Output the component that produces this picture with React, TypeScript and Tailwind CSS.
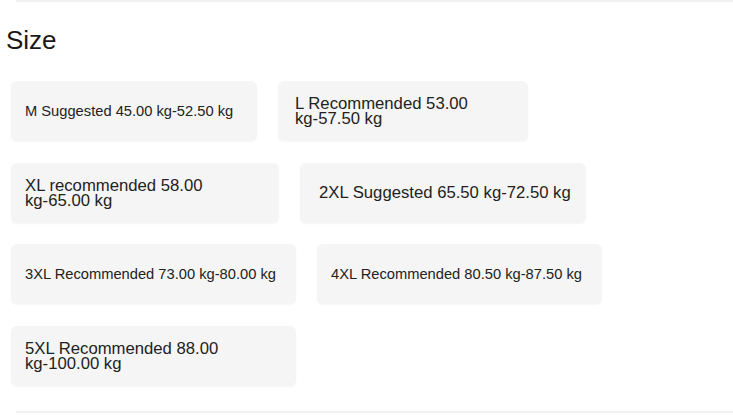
export default function App() {
  const items = [
    { lines: ['M Suggested 45.00 kg-52.50 kg'], w: 'w-[246px]', t: 'text-[14.7px]', pl: 'pl-[14px]' },
    { lines: ['L Recommended 53.00', 'kg-57.50 kg'], w: 'w-[250px]', t: 'text-[16.7px]', pl: 'pl-[17px]' },
    { lines: ['XL recommended 58.00', 'kg-65.00 kg'], w: 'w-[268px]', t: 'text-[16.7px]', pl: 'pl-[14px]' },
    { lines: ['2XL Suggested 65.50 kg-72.50 kg'], w: 'w-[286px]', t: 'text-[16.7px]', pl: 'pl-[19px]' },
    { lines: ['3XL Recommended 73.00 kg-80.00 kg'], w: 'w-[285px]', t: 'text-[14.7px]', pl: 'pl-[14px]' },
    { lines: ['4XL Recommended 80.50 kg-87.50 kg'], w: 'w-[285px]', t: 'text-[14.7px]', pl: 'pl-[14px]' },
    { lines: ['5XL Recommended 88.00', 'kg-100.00 kg'], w: 'w-[285px]', t: 'text-[16.7px]', pl: 'pl-[14px]' },
  ]

  return (
    <div className="w-[733px] h-[419px] bg-white overflow-hidden font-['Liberation_Sans',Arial,sans-serif] text-[#222]">
      <div className="ml-[16px] h-[2px] bg-[#f2f2f2]" />
      <h2 className="pl-[6px] pt-[23px] text-[26px] leading-[30px] text-[#1a1a1a]">Size</h2>
      <div className="flex flex-wrap gap-x-[21px] gap-y-[21.5px] pl-[11px] pt-[26px] pr-4">
        {items.map((it) => (
          <div
            key={it.lines[0]}
            className={`${it.w} ${it.pl} h-[60px] pr-[14px] flex flex-col justify-center rounded-md bg-[#f5f5f5] shadow-[0_1px_2px_rgba(0,0,0,0.04)]`}
          >
            {it.lines.map((l) => (
              <span key={l} className={`${it.t} leading-[15px] whitespace-nowrap`}>
                {l}
              </span>
            ))}
          </div>
        ))}
      </div>
      <div className="ml-[16px] mt-[25px] h-[2px] bg-[#f2f2f2]" />
    </div>
  )
}
